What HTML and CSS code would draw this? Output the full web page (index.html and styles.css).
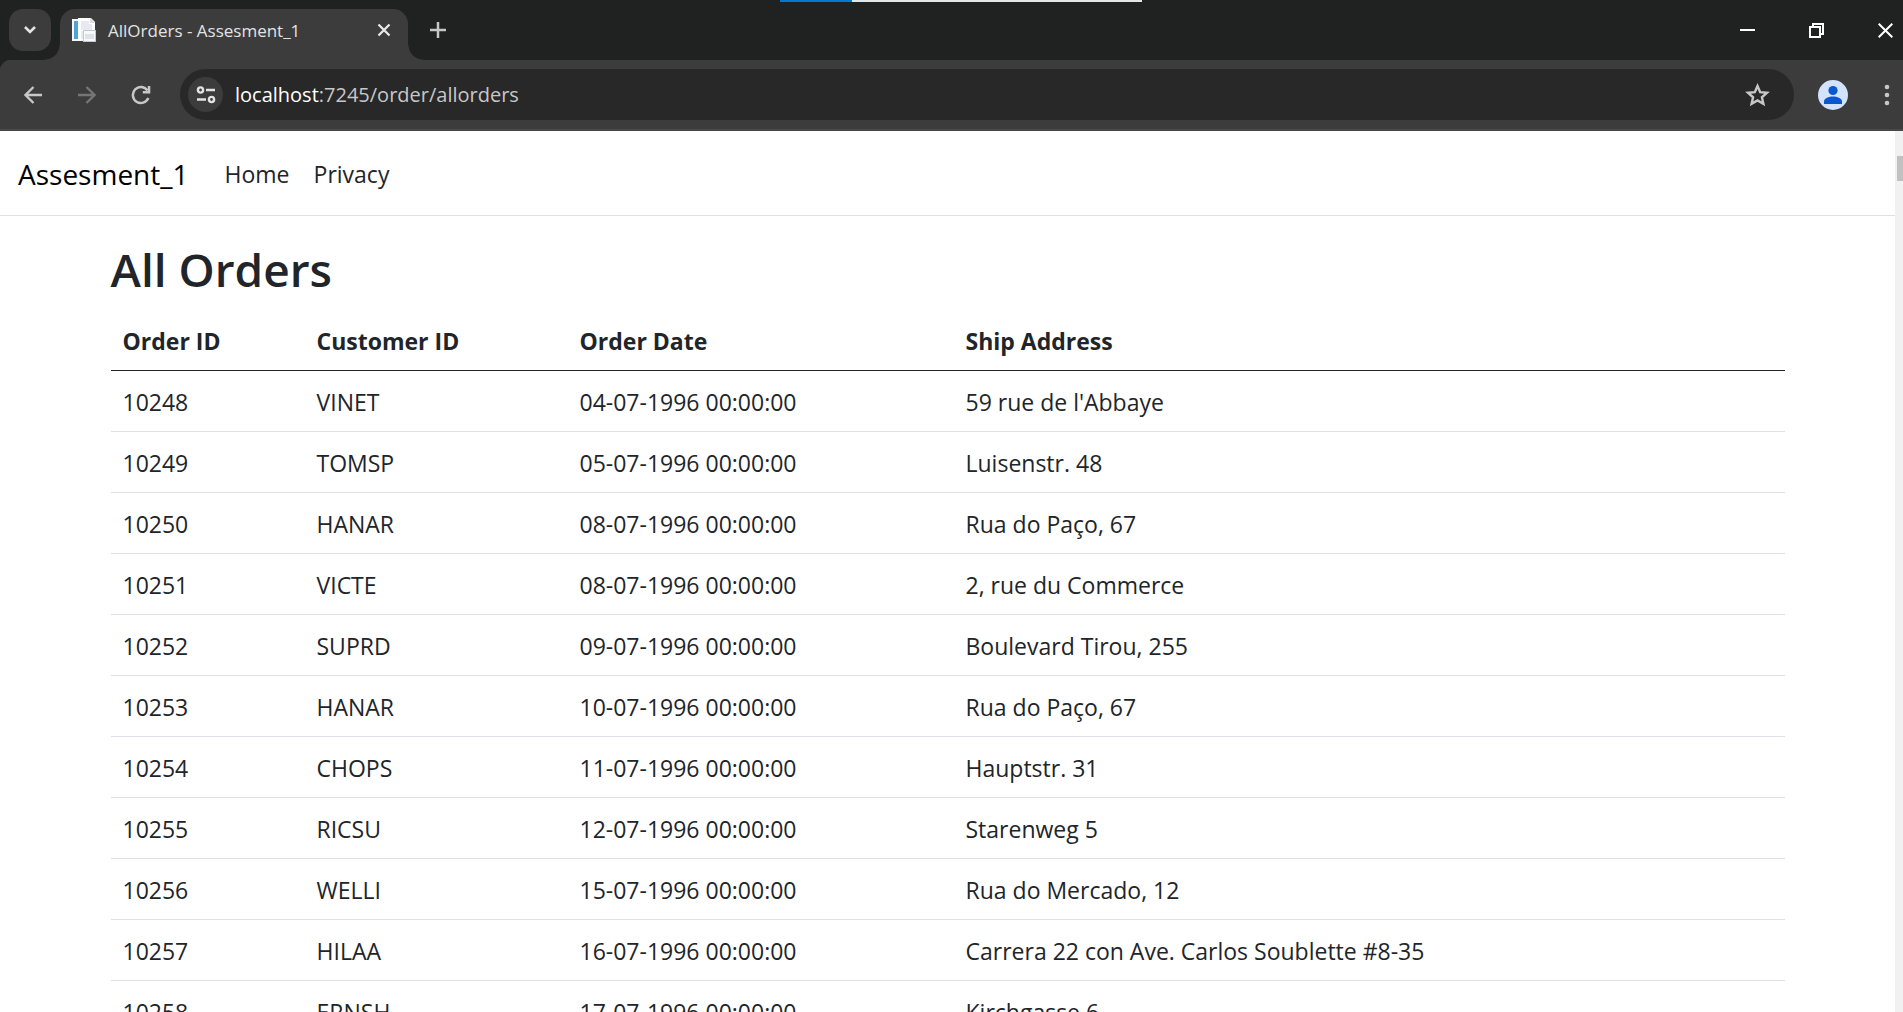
FILE: index.html
```html
<!DOCTYPE html>
<html lang="en">
<head>
<meta charset="utf-8">
<meta name="viewport" content="width=device-width, initial-scale=1">
<title>AllOrders - Assesment_1</title>
<link rel="stylesheet" href="styles.css">
</head>
<body>
<div class="window">
  <div class="share-bar"></div>
  <div class="tab-strip">
    <button class="tab-search" aria-label="Search tabs"><svg width="14" height="10" viewBox="0 0 14 10"><path d="M2 2l5 5 5-5" fill="none" stroke="#e3e3e3" stroke-width="2.6"/></svg></button>
    <div class="tab">
      <svg class="favicon" width="24" height="24" viewBox="0 0 24 24">
        <rect x="0" y="1" width="11" height="22" fill="#f4f8fb"/>
        <rect x="2" y="3" width="4" height="18" fill="#4fa3d9"/>
        <path d="M6 0h13l4 4v18H6z" fill="#fff"/>
        <path d="M9 3h8v3h3v6H9z" fill="#e6e9f0"/>
        <path d="M9 13h2v8H9z" fill="#e6e9f0"/>
        <path d="M18 0l5 5h-5z" fill="#d5dae4"/>
        <rect x="11" y="12" width="13" height="12" fill="#c3c9d4"/>
        <rect x="12" y="13" width="11" height="10" fill="#f8f9fb"/>
        <rect x="13" y="16" width="9" height="5" fill="#dde1e9"/>
      </svg>
      <span class="tab-title">AllOrders - Assesment_1</span>
      <button class="tab-close" aria-label="Close tab"><svg width="14" height="14" viewBox="0 0 14 14"><path d="M1.500 1.500l11 11M12.500 1.500l-11 11" stroke="#e8e8e8" stroke-width="2.300"/></svg></button>
    </div>
    <button class="new-tab" aria-label="New tab"><svg width="16" height="16" viewBox="0 0 16 16"><path d="M8 0v16M0 8h16" stroke="#c7c7c7" stroke-width="2.500"/></svg></button>
    <div class="window-controls">
      <button aria-label="Minimize"><svg width="15" height="15" viewBox="0 0 15 15"><path d="M0 7h15" stroke="#fff" stroke-width="2"/></svg></button>
      <button aria-label="Restore"><svg width="15" height="15" viewBox="0 0 15 15"><path d="M1 4h10v10H1zM4 4V1h10v10h-3" fill="none" stroke="#fff" stroke-width="2"/></svg></button>
      <button aria-label="Close"><svg width="15" height="15" viewBox="0 0 15 15"><path d="M.7.7l13.600 13.600M14.300.7L.7 14.300" stroke="#fff" stroke-width="2"/></svg></button>
    </div>
  </div>
  <div class="toolbar">
    <button class="tool" aria-label="Back"><svg width="18" height="18" viewBox="0 0 18 18"><path d="M18 9H2M9.500 1L1.500 9l8 8" fill="none" stroke="#c7c7c7" stroke-width="2.400"/></svg></button>
    <button class="tool" aria-label="Forward" disabled><svg width="18" height="18" viewBox="0 0 18 18"><path d="M0 9h16M8.500 1l8 8-8 8" fill="none" stroke="#757575" stroke-width="2.400"/></svg></button>
    <button class="tool" aria-label="Reload"><svg width="20" height="20" viewBox="0 0 20 20"><path d="M17.300 13a8 8 0 1 1-.8-7.500" fill="none" stroke="#c7c7c7" stroke-width="2.500"/><path d="M19.300 1v7.500h-7.500V6h5V1z" fill="#c7c7c7"/></svg></button>
    <div class="omnibox">
      <button class="site-info" aria-label="View site information"><svg width="20" height="18" viewBox="0 0 20 18"><g fill="none" stroke="#e3e3e3" stroke-width="2.400"><circle cx="4.500" cy="4" r="2.600"/><path d="M10 4h9M1 13.500h9"/><circle cx="15.500" cy="13.500" r="2.600"/></g></svg></button>
      <div class="url"><span class="host">localhost</span>:7245/order/allorders</div>
      <button class="bookmark" aria-label="Bookmark this tab"><svg width="25" height="24" viewBox="0 0 25 24"><path d="M12.500 3l2.700 6.200 6.800.6-5.100 4.500 1.500 6.600-5.900-3.500-5.900 3.500 1.500-6.600L3 9.800l6.800-.6z" fill="none" stroke="#c7c7c7" stroke-width="2.400"/></svg></button>
    </div>
    <button class="profile" aria-label="Profile"><svg width="30" height="30" viewBox="0 0 30 30"><circle cx="15" cy="15" r="15" fill="#d3e3fd"/><circle cx="15" cy="10.500" r="4.600" fill="#0b57d0"/><path d="M6 24v-2.500c0-3.500 5-5 9-5s9 1.500 9 5V24z" fill="#0b57d0"/></svg></button>
    <button class="more" aria-label="Menu"><svg width="6" height="22" viewBox="0 0 6 22"><g fill="#c7c7c7"><circle cx="3" cy="3" r="2.300"/><circle cx="3" cy="11" r="2.300"/><circle cx="3" cy="19" r="2.300"/></g></svg></button>
  </div>
  <div class="viewport">
    <div class="page">
      <header>
        <nav class="navbar">
          <a class="brand" href="#">Assesment_1</a>
          <a class="nav-link" href="#">Home</a>
          <a class="nav-link" href="#">Privacy</a>
        </nav>
      </header>
      <main class="container">
        <h1>All Orders</h1>
        <table class="orders">
          <colgroup><col class="col-id"><col class="col-customer"><col class="col-date"><col></colgroup>
          <thead><tr><th scope="col">Order ID</th><th scope="col">Customer ID</th><th scope="col">Order Date</th><th scope="col">Ship Address</th></tr></thead>
          <tbody>
            <tr><td>10248</td><td>VINET</td><td>04-07-1996 00:00:00</td><td>59 rue de l'Abbaye</td></tr>
            <tr><td>10249</td><td>TOMSP</td><td>05-07-1996 00:00:00</td><td>Luisenstr. 48</td></tr>
            <tr><td>10250</td><td>HANAR</td><td>08-07-1996 00:00:00</td><td>Rua do Paço, 67</td></tr>
            <tr><td>10251</td><td>VICTE</td><td>08-07-1996 00:00:00</td><td>2, rue du Commerce</td></tr>
            <tr><td>10252</td><td>SUPRD</td><td>09-07-1996 00:00:00</td><td>Boulevard Tirou, 255</td></tr>
            <tr><td>10253</td><td>HANAR</td><td>10-07-1996 00:00:00</td><td>Rua do Paço, 67</td></tr>
            <tr><td>10254</td><td>CHOPS</td><td>11-07-1996 00:00:00</td><td>Hauptstr. 31</td></tr>
            <tr><td>10255</td><td>RICSU</td><td>12-07-1996 00:00:00</td><td>Starenweg 5</td></tr>
            <tr><td>10256</td><td>WELLI</td><td>15-07-1996 00:00:00</td><td>Rua do Mercado, 12</td></tr>
            <tr><td>10257</td><td>HILAA</td><td>16-07-1996 00:00:00</td><td>Carrera 22 con Ave. Carlos Soublette #8-35</td></tr>
            <tr><td>10258</td><td>ERNSH</td><td>17-07-1996 00:00:00</td><td>Kirchgasse 6</td></tr>
          </tbody>
        </table>
      </main>
    </div>
    <div class="scrollbar"><div class="thumb"></div></div>
  </div>
</div>
</body>
</html>
```
FILE: styles.css
```css
* { box-sizing: border-box; }

body {
  margin: 0;
  background: #fff;
  color: #212529;
  font: 23px/36px "Segoe UI", "Open Sans", "Noto Sans", sans-serif;
}

button {
  display: flex;
  align-items: center;
  justify-content: center;
  flex: none;
  margin: 0;
  padding: 0;
  border: 0;
  background: none;
}

svg { display: block; }

.window {
  position: relative;
  display: flex;
  flex-direction: column;
  height: 100vh;
  overflow: hidden;
}

/* Screen sharing indicator over the top edge */
.share-bar {
  position: absolute;
  top: 0;
  right: 40%;
  width: 19%;
  height: 2px;
  background: linear-gradient(to right, #0078d4 20%, #e1e6e6 20%);
}

/* Tab strip */
.tab-strip {
  display: flex;
  flex: none;
  height: 60px;
  padding: 9px 0 0 9px;
  background: #202221;
}

.tab-search {
  width: 42px;
  height: 42px;
  border-radius: 14px;
  background: #3c3c3c;
}

.tab {
  position: relative;
  display: flex;
  align-items: center;
  width: 348px;
  margin-left: 9px;
  padding: 0 12px 9px;
  border-radius: 15px 15px 0 0;
  background: #3c3c3c;
}

.tab::before,
.tab::after {
  content: "";
  position: absolute;
  bottom: 0;
  width: 15px;
  height: 15px;
}

.tab::before {
  right: 100%;
  background: radial-gradient(circle at 0 0, transparent 14px, #3c3c3c 15px);
}

.tab::after {
  left: 100%;
  background: radial-gradient(circle at 100% 0, transparent 14px, #3c3c3c 15px);
}

.favicon { flex: none; }

.tab-title {
  flex: 1;
  margin-left: 12px;
  padding-top: 2px;
  color: #e3e3e3;
  font-size: 17px;
  line-height: 24px;
  white-space: nowrap;
}

.tab-close { width: 24px; height: 24px; }

.new-tab {
  width: 42px;
  height: 42px;
  margin-left: 9px;
}

.window-controls {
  display: flex;
  margin: -9px -17px 0 auto;
}

.window-controls button { width: 69px; height: 60px; }

/* Toolbar */
.toolbar {
  display: flex;
  flex: none;
  align-items: center;
  height: 71px;
  padding-left: 12px;
  border-bottom: 2px solid #484848;
  background: radial-gradient(circle at 12px 12px, #3c3c3c 12px, #202221 13px) 0 0 / 12px 12px no-repeat, #3c3c3c;
}

.tool {
  width: 42px;
  height: 42px;
  margin-right: 12px;
}

.omnibox {
  display: flex;
  flex: 1;
  align-items: center;
  height: 51px;
  margin-left: 6px;
  padding: 0 24px 0 8px;
  border-radius: 26px;
  background: #282828;
}

.site-info {
  width: 35px;
  height: 35px;
  border-radius: 50%;
  background: #3c3c3c;
}

.url {
  flex: 1;
  margin-left: 12px;
  color: #c7c7c7;
  font-size: 20px;
  line-height: 30px;
}

.host { color: #fff; }

.profile { margin-left: 24px; }

.more {
  width: 24px;
  height: 42px;
  margin: 0 4px 0 27px;
}

/* Page area */
.viewport {
  display: flex;
  flex: 1;
  min-height: 0;
}

.page {
  flex: 1;
  min-width: 0;
  overflow: hidden;
}

.scrollbar {
  flex: none;
  width: 8px;
  padding: 25px 0 0 2px;
  background: #f1f1f1;
}

.thumb { height: 25px; background: #c1c1c1; }

.navbar {
  display: flex;
  align-items: center;
  height: 85px;
  padding: 2px 18px 0;
  border-bottom: 1px solid #dee2e6;
}

.brand {
  margin-right: 24px;
  color: #000;
  font-size: 28px;
  line-height: 48px;
  text-decoration: none;
}

.nav-link {
  padding: 12px;
  color: #212529;
  text-decoration: none;
}

.container {
  max-width: 1710px;
  margin: 0 auto;
  padding: 24px 18px 0;
}

h1 {
  margin: 0 0 12px;
  font-size: 46px;
  font-weight: 600;
  line-height: 58px;
}

.orders {
  width: 100%;
  table-layout: fixed;
  border-collapse: collapse;
}

.col-id { width: 194px; }
.col-customer { width: 263px; }
.col-date { width: 386px; }

.orders th,
.orders td {
  padding: 13px 12px 11px;
  border-bottom: 1px solid #dee2e6;
  text-align: left;
}

.orders th { border-bottom-color: #212529; font-weight: 700; }
```
